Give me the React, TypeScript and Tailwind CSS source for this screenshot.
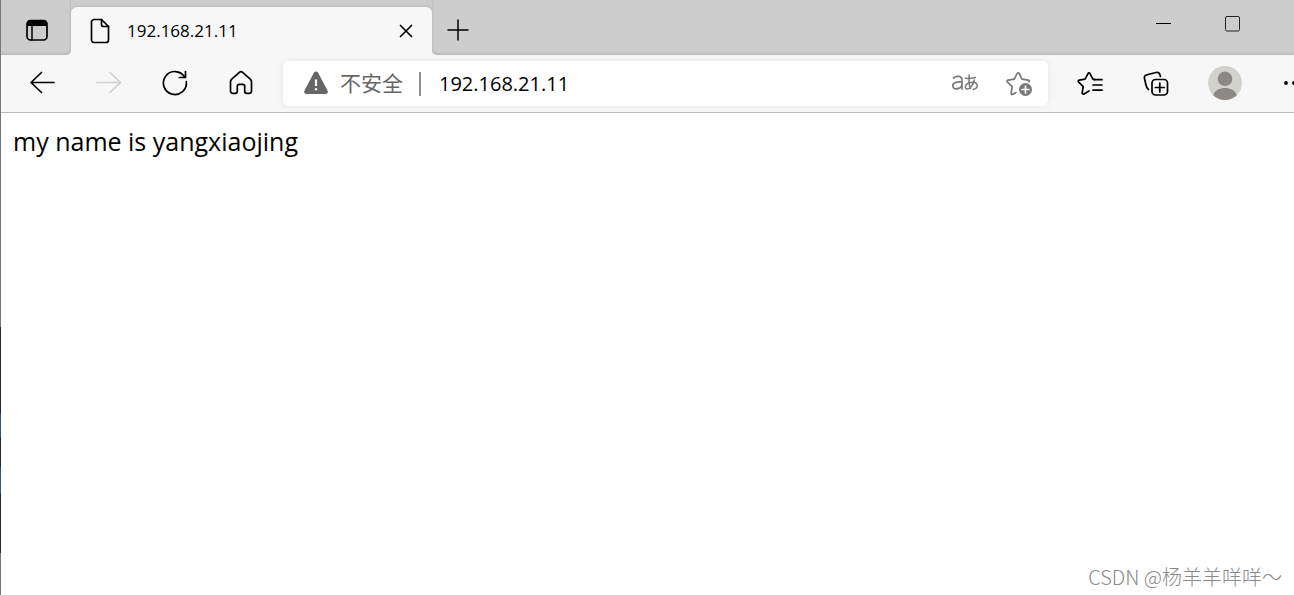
import type { ReactNode } from "react";

function ToolButton({ label, disabled, children }: { label: string; disabled?: boolean; children: ReactNode }) {
  return (
    <button
      type="button"
      aria-label={label}
      disabled={disabled}
      className="flex h-full w-[66px] shrink-0 items-center justify-center pb-0.5 text-black disabled:text-[#d0d0d0]"
    >
      {children}
    </button>
  );
}

function Icon({ children }: { children: ReactNode }) {
  return (
    <svg
      width="28"
      height="28"
      viewBox="0 0 28 28"
      fill="none"
      stroke="currentColor"
      strokeWidth="1.7"
      strokeLinecap="round"
      strokeLinejoin="round"
      className="shrink-0"
      aria-hidden="true"
    >
      {children}
    </svg>
  );
}

function TabStrip() {
  return (
    <header className="flex h-[55px] bg-[#f7f7f7]">
      <div className="flex w-[70px] shrink-0 items-center justify-center rounded-br-[5px] bg-[#cdcdcd] pt-1 pl-0.5 shadow-[inset_-1px_-2px_2px_#bdbdbd]">
        <button type="button" aria-label="Tab actions">
          <Icon>
            <rect x="4" y="4.5" width="20" height="19.5" rx="3.5" />
            <path d="M4 10V7.5a3 3 0 0 1 3-3h14a3 3 0 0 1 3 3V10z" fill="currentColor" stroke="none" />
            <path d="M9 10v14" strokeWidth="1.5" />
          </Icon>
        </button>
      </div>
      <div className="w-[361px] shrink-0 bg-[#cdcdcd] pt-[7px]">
        <div className="flex h-full items-center rounded-t-[6px] bg-[#f7f7f7] pr-3 pl-[15px] shadow-[0_-1px_2px_#bababa]">
          <Icon>
            <path d="M8 2.5h7.500l7 7V23a2.500 2.500 0 0 1-2.500 2.500H8A2.500 2.500 0 0 1 5.500 23V5A2.500 2.500 0 0 1 8 2.500z" />
            <path d="M15.500 2.500V7.500a2 2 0 0 0 2 2h5" />
          </Icon>
          <span className="ml-[13px] flex-1 font-['Open_Sans','Noto_Sans',sans-serif] text-[17px] leading-6 text-black">
            192.168.21.11
          </span>
          <button type="button" aria-label="Close tab">
            <Icon>
              <path d="M8.500 8.500l11 11M19.500 8.500l-11 11" />
            </Icon>
          </button>
        </div>
      </div>
      <div className="flex flex-1 justify-between rounded-bl-[5px] bg-[#cdcdcd] pl-3 shadow-[inset_1px_-2px_2px_#bdbdbd]">
        <button type="button" aria-label="New tab" className="pt-1">
          <Icon>
            <path d="M4 14h20M14 4v20" strokeWidth="1.5" />
          </Icon>
        </button>
        <div className="flex h-12 items-center pr-[27px]">
          <button type="button" aria-label="Minimize" className="flex w-[69px] justify-center">
            <svg width="16" height="16" viewBox="0 0 16 16" aria-hidden="true">
              <path d="M0 7.5h15" stroke="black" />
            </svg>
          </button>
          <button type="button" aria-label="Maximize" className="flex w-[69px] justify-center">
            <svg width="16" height="16" viewBox="0 0 16 16" fill="none" aria-hidden="true">
              <rect x=".5" y=".5" width="14" height="14.5" rx="1.5" stroke="#222" />
            </svg>
          </button>
        </div>
      </div>
    </header>
  );
}

function AddressBar() {
  return (
    <div className="ml-[9px] flex h-[45px] min-w-0 flex-1 items-center rounded-[6px] bg-white pr-[15px] pl-5 shadow-[0_0_6px_#e4e4e4]">
      <button type="button" className="flex shrink-0 items-center pb-0.5 text-[#666]">
        <svg width="26" height="26" viewBox="0 0 26 26" aria-hidden="true">
          <path
            d="M11 2.600a2.300 2.300 0 0 1 4 0l9.600 18.200a2.200 2.200 0 0 1-2 3.200H3.400a2.200 2.200 0 0 1-2-3.200z"
            fill="#666"
          />
          <path d="M13 9.500v6.500M13 18.300v2" stroke="white" strokeWidth="2.200" />
        </svg>
        <span className="ml-[11px] pb-0.5 font-['Noto_Sans_CJK_SC',sans-serif] text-[21px] leading-6">不安全</span>
      </button>
      <span className="ml-4 h-6 w-0.5 shrink-0 bg-[#929292]" />
      <input
        aria-label="Address"
        defaultValue="192.168.21.11"
        className="ml-[18px] h-8 min-w-0 flex-1 bg-transparent font-['Open_Sans','Noto_Sans',sans-serif] text-[20px] text-black outline-none"
      />
      <button type="button" aria-label="Translate page" className="shrink-0 text-[#787878]">
        <Icon>
          <path d="M2.500 8C5 5.700 11 5.200 11 10.500V19M11 12C5.500 11.600 1.800 12.700 1.800 15.700c0 4.500 7.200 4 9.200-.2" />
          <path
            d="M14.500 8.300c4 .3 7 0 10-.8M18.200 5c-.6 5.500-.3 10 1.400 13.500M23.300 10c-1 5-4.300 9-7 9-3.200 0-2.500-5.500 3.200-6.500 8-1.300 8.800 6 2.600 7"
            strokeWidth="1.5"
          />
        </Icon>
      </button>
      <button type="button" aria-label="Add to favorites" className="ml-[26px] shrink-0 pb-0.5 text-[#787878]">
        <Icon>
          <path d="M8 25.200c-1.300.6-2-.1-1.800-1.300l1-6.200-4.700-4.600c-.8-.8-.5-1.800.6-2l6.200-.9 2.800-5.700c.5-1 1.500-1 2 0l2.800 5.700 6.200.9c1.100.2 1.500 1 .9 1.700" />
          <path d="M8 25.200l3-1.600" />
          <circle cx="20.500" cy="20.500" r="6.500" fill="currentColor" stroke="none" />
          <path d="M17 20.500h7M20.500 17v7" stroke="white" />
        </Icon>
      </button>
    </div>
  );
}

function Toolbar() {
  return (
    <nav className="flex h-[58px] items-center overflow-hidden border-b border-[#b9b9b9] bg-[#f7f7f7] pl-[9px]">
      <ToolButton label="Back">
        <Icon>
          <path d="M25 13.500H2M12.500 3.500l-10.500 10 10.500 10" />
        </Icon>
      </ToolButton>
      <ToolButton label="Forward" disabled>
        <Icon>
          <path d="M2 13.500h23.500M15 3.500l10.500 10-10.500 10" />
        </Icon>
      </ToolButton>
      <ToolButton label="Refresh">
        <Icon>
          <path d="M25.300 12.500A11.500 11.500 0 1 1 23.700 8" />
          <path d="M24.500 2.500v6h-6" />
        </Icon>
      </ToolButton>
      <ToolButton label="Home">
        <Icon>
          <path d="M12.700 3.200a2 2 0 0 1 2.600 0l8 7a3 3 0 0 1 1.200 2.300V22a2.300 2.300 0 0 1-2.300 2.300h-2.500a2 2 0 0 1-2-2v-5a2 2 0 0 0-2-2h-3.400a2 2 0 0 0-2 2v5a2 2 0 0 1-2 2H5.800A2.300 2.300 0 0 1 3.500 22v-9.500a3 3 0 0 1 1.200-2.300z" />
        </Icon>
      </ToolButton>
      <AddressBar />
      <div className="ml-[9px] flex h-full shrink-0 items-center">
        <ToolButton label="Favorites">
          <Icon>
            <path d="M13 22l-5 2.900c-1.100.6-2-.1-1.800-1.300l1-6-4.500-4.500c-.9-.9-.6-1.800.6-2l5.800-.9 2.900-5.600c.5-1 1.500-1 2 0l2.900 5.600 2 .3" />
            <path d="M18 10.700h8M17 16h9M17 21.200h9" />
          </Icon>
        </ToolButton>
        <ToolButton label="Collections">
          <Icon>
            <path d="M6.500 20.500C5 19.500 4.400 18 4 16L2.500 9.500C2 7.500 3 6.200 5 5.700L14 3.500c2-.5 3.500.5 4 2.500l.4 1.500" />
            <rect x="10" y="10.500" width="15.500" height="15.500" rx="3.500" />
            <path d="M17.800 14v9M13.300 18.500h9" />
          </Icon>
        </ToolButton>
        <button type="button" aria-label="Profile" className="ml-[3px] flex w-[66px] justify-center pb-0.5">
          <svg width="34" height="34" viewBox="0 0 34 34" aria-hidden="true">
            <circle cx="17" cy="17" r="17" fill="#d2d1cd" />
            <circle cx="17" cy="12.800" r="7.300" fill="#8c8885" />
            <path d="M5.200 29.200C7 24.500 11.500 22 17 22s10 2.500 11.800 7.200A17 17 0 0 1 5.200 29.200z" fill="#8c8885" />
          </svg>
        </button>
        <button type="button" aria-label="Settings and more" className="flex w-9 overflow-hidden pb-0.5 pl-[26px]">
          <svg width="28" height="8" viewBox="0 0 28 8" className="shrink-0" aria-hidden="true">
            <circle cx="2" cy="4" r="1.900" />
            <circle cx="10" cy="4" r="1.900" />
            <circle cx="18" cy="4" r="1.900" />
          </svg>
        </button>
      </div>
    </nav>
  );
}

export default function App() {
  return (
    <div className="flex min-h-screen overflow-hidden bg-white">
      <div className="flex w-px shrink-0 flex-col" aria-hidden="true">
        <span className="grow-[327] bg-[#777777]" />
        <span className="grow-[86] bg-[#1e2734]" />
        <span className="grow-[24] bg-[#34567c]" />
        <span className="grow-[30] bg-[#1e2734]" />
        <span className="grow-[27] bg-[#2d527b]" />
        <span className="grow-[59] bg-[#1e2734]" />
        <span className="grow-[42] bg-[#777777]" />
      </div>
      <div className="flex min-w-0 flex-1 flex-col">
        <TabStrip />
        <Toolbar />
        <main className="flex flex-1 flex-col justify-between">
          <p className="px-3 pt-3 font-['Open_Sans','Noto_Sans',sans-serif] text-[25px] leading-8 text-black">
            my name is yangxiaojing
          </p>
          <p className="self-end pr-3 pb-1.5 font-['Noto_Sans_CJK_SC',sans-serif] text-[20px] leading-6 font-light text-[#8a8a8a]">
            CSDN @杨羊羊咩咩～
          </p>
        </main>
      </div>
    </div>
  );
}
